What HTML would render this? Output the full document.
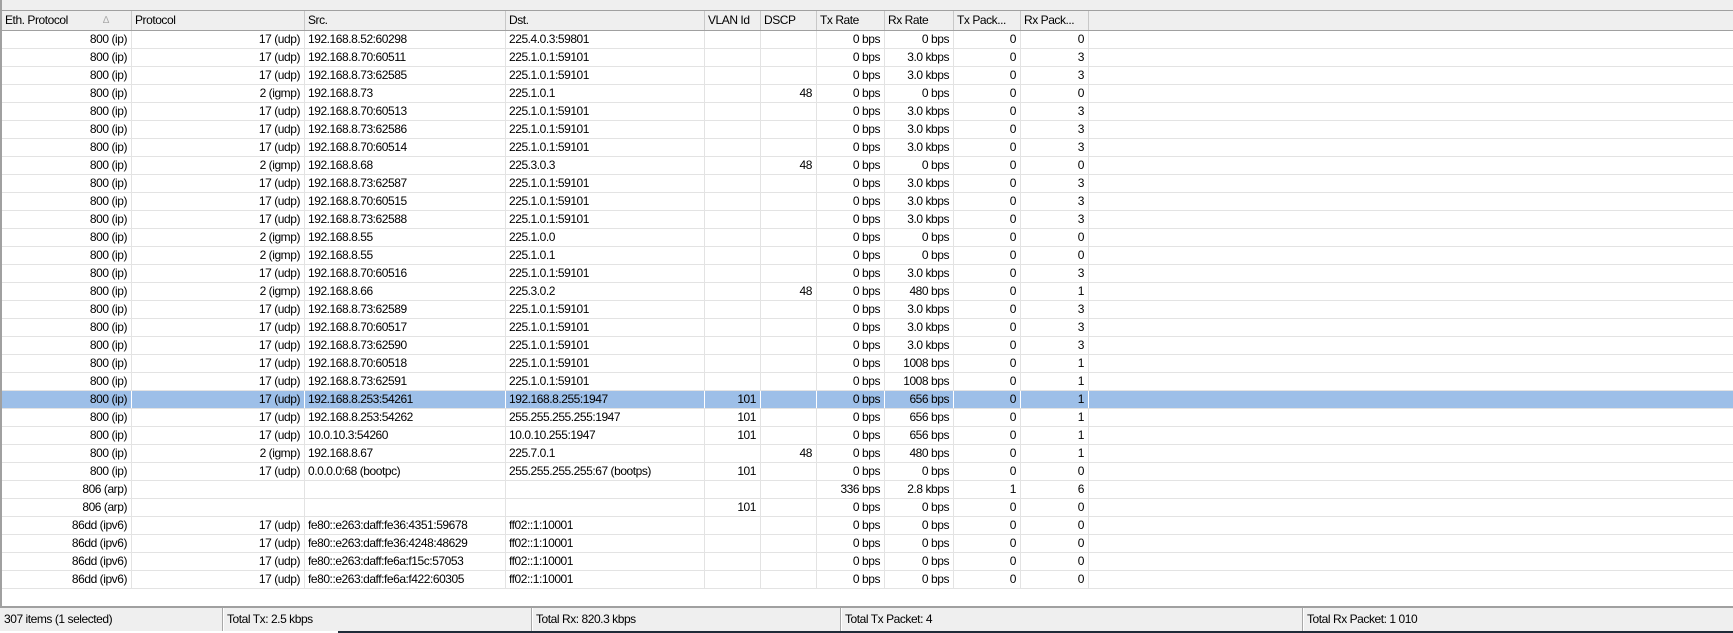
<!DOCTYPE html>
<html><head><meta charset="utf-8"><style>
*{margin:0;padding:0;box-sizing:border-box}
body{width:1733px;height:633px;overflow:hidden;background:#fff;font-family:"Liberation Sans",Arial,sans-serif;font-size:12px;letter-spacing:-0.45px;color:#000;position:relative}
#top{position:absolute;left:0;top:0;width:1733px;height:10px;background:#efefef;border-left:2px solid #a0a0a0}
#hdr{position:absolute;left:0;top:10px;width:1733px;height:21px;background:#efefef;border-top:1px solid #a0a0a0;border-bottom:1px solid #a0a0a0;border-left:2px solid #a0a0a0;display:flex}
#hdr div{height:19px;line-height:19px;padding-left:3px;border-right:1px solid #c8c8c8;white-space:nowrap;overflow:hidden;position:relative}
#body{position:absolute;left:0;top:31px;width:1733px;height:576px;border-left:2px solid #a0a0a0;background:#fff}
.r{display:flex;height:18px;border-bottom:1px solid #e3e3e3;width:1731px}
.r div{height:17px;line-height:17px;border-right:1px solid #e3e3e3;white-space:nowrap;overflow:hidden;padding:0 3px}
.r div.a{text-align:right;padding-right:4px}
.r.s{background:#9dbfe8}
.r.s div{border-right-color:#fff}
.c1{width:130px}.c2{width:173px}.c3{width:201px}.c4{width:199px}.c5{width:56px}.c6{width:56px}.c7{width:68px}.c8{width:69px}.c9{width:67px}.c10{width:68px}
.r div.cx,#hdr div.cx{flex:1;border-right:none}
#st{position:absolute;left:0;top:606px;width:1733px;height:25px;background:#efefef;border-top:2px solid #a0a0a0}
#st div{position:absolute;top:0;height:23px;line-height:23px;padding-left:4px;border-left:1px solid #a8a8a8;box-shadow:inset 1px 0 #fff}
#dk{position:absolute;left:338px;top:631px;width:1395px;height:2px;background:#1f2b38}
</style></head><body>
<div id="top"></div>
<div id="hdr">
<div class="c1">Eth. Protocol<span style="position:absolute;left:101px;color:#aaa;font-size:10px">∆</span></div><div class="c2">Protocol</div><div class="c3">Src.</div><div class="c4">Dst.</div><div class="c5">VLAN Id</div><div class="c6">DSCP</div><div class="c7">Tx Rate</div><div class="c8">Rx Rate</div><div class="c9">Tx Pack...</div><div class="c10">Rx Pack...</div><div class="cx"></div>
</div>
<div id="body">
<div class="r"><div class="c1 a">800 (ip)</div><div class="c2 a">17 (udp)</div><div class="c3">192.168.8.52:60298</div><div class="c4">225.4.0.3:59801</div><div class="c5 a"></div><div class="c6 a"></div><div class="c7 a">0 bps</div><div class="c8 a">0 bps</div><div class="c9 a">0</div><div class="c10 a">0</div><div class="cx"></div></div>
<div class="r"><div class="c1 a">800 (ip)</div><div class="c2 a">17 (udp)</div><div class="c3">192.168.8.70:60511</div><div class="c4">225.1.0.1:59101</div><div class="c5 a"></div><div class="c6 a"></div><div class="c7 a">0 bps</div><div class="c8 a">3.0 kbps</div><div class="c9 a">0</div><div class="c10 a">3</div><div class="cx"></div></div>
<div class="r"><div class="c1 a">800 (ip)</div><div class="c2 a">17 (udp)</div><div class="c3">192.168.8.73:62585</div><div class="c4">225.1.0.1:59101</div><div class="c5 a"></div><div class="c6 a"></div><div class="c7 a">0 bps</div><div class="c8 a">3.0 kbps</div><div class="c9 a">0</div><div class="c10 a">3</div><div class="cx"></div></div>
<div class="r"><div class="c1 a">800 (ip)</div><div class="c2 a">2 (igmp)</div><div class="c3">192.168.8.73</div><div class="c4">225.1.0.1</div><div class="c5 a"></div><div class="c6 a">48</div><div class="c7 a">0 bps</div><div class="c8 a">0 bps</div><div class="c9 a">0</div><div class="c10 a">0</div><div class="cx"></div></div>
<div class="r"><div class="c1 a">800 (ip)</div><div class="c2 a">17 (udp)</div><div class="c3">192.168.8.70:60513</div><div class="c4">225.1.0.1:59101</div><div class="c5 a"></div><div class="c6 a"></div><div class="c7 a">0 bps</div><div class="c8 a">3.0 kbps</div><div class="c9 a">0</div><div class="c10 a">3</div><div class="cx"></div></div>
<div class="r"><div class="c1 a">800 (ip)</div><div class="c2 a">17 (udp)</div><div class="c3">192.168.8.73:62586</div><div class="c4">225.1.0.1:59101</div><div class="c5 a"></div><div class="c6 a"></div><div class="c7 a">0 bps</div><div class="c8 a">3.0 kbps</div><div class="c9 a">0</div><div class="c10 a">3</div><div class="cx"></div></div>
<div class="r"><div class="c1 a">800 (ip)</div><div class="c2 a">17 (udp)</div><div class="c3">192.168.8.70:60514</div><div class="c4">225.1.0.1:59101</div><div class="c5 a"></div><div class="c6 a"></div><div class="c7 a">0 bps</div><div class="c8 a">3.0 kbps</div><div class="c9 a">0</div><div class="c10 a">3</div><div class="cx"></div></div>
<div class="r"><div class="c1 a">800 (ip)</div><div class="c2 a">2 (igmp)</div><div class="c3">192.168.8.68</div><div class="c4">225.3.0.3</div><div class="c5 a"></div><div class="c6 a">48</div><div class="c7 a">0 bps</div><div class="c8 a">0 bps</div><div class="c9 a">0</div><div class="c10 a">0</div><div class="cx"></div></div>
<div class="r"><div class="c1 a">800 (ip)</div><div class="c2 a">17 (udp)</div><div class="c3">192.168.8.73:62587</div><div class="c4">225.1.0.1:59101</div><div class="c5 a"></div><div class="c6 a"></div><div class="c7 a">0 bps</div><div class="c8 a">3.0 kbps</div><div class="c9 a">0</div><div class="c10 a">3</div><div class="cx"></div></div>
<div class="r"><div class="c1 a">800 (ip)</div><div class="c2 a">17 (udp)</div><div class="c3">192.168.8.70:60515</div><div class="c4">225.1.0.1:59101</div><div class="c5 a"></div><div class="c6 a"></div><div class="c7 a">0 bps</div><div class="c8 a">3.0 kbps</div><div class="c9 a">0</div><div class="c10 a">3</div><div class="cx"></div></div>
<div class="r"><div class="c1 a">800 (ip)</div><div class="c2 a">17 (udp)</div><div class="c3">192.168.8.73:62588</div><div class="c4">225.1.0.1:59101</div><div class="c5 a"></div><div class="c6 a"></div><div class="c7 a">0 bps</div><div class="c8 a">3.0 kbps</div><div class="c9 a">0</div><div class="c10 a">3</div><div class="cx"></div></div>
<div class="r"><div class="c1 a">800 (ip)</div><div class="c2 a">2 (igmp)</div><div class="c3">192.168.8.55</div><div class="c4">225.1.0.0</div><div class="c5 a"></div><div class="c6 a"></div><div class="c7 a">0 bps</div><div class="c8 a">0 bps</div><div class="c9 a">0</div><div class="c10 a">0</div><div class="cx"></div></div>
<div class="r"><div class="c1 a">800 (ip)</div><div class="c2 a">2 (igmp)</div><div class="c3">192.168.8.55</div><div class="c4">225.1.0.1</div><div class="c5 a"></div><div class="c6 a"></div><div class="c7 a">0 bps</div><div class="c8 a">0 bps</div><div class="c9 a">0</div><div class="c10 a">0</div><div class="cx"></div></div>
<div class="r"><div class="c1 a">800 (ip)</div><div class="c2 a">17 (udp)</div><div class="c3">192.168.8.70:60516</div><div class="c4">225.1.0.1:59101</div><div class="c5 a"></div><div class="c6 a"></div><div class="c7 a">0 bps</div><div class="c8 a">3.0 kbps</div><div class="c9 a">0</div><div class="c10 a">3</div><div class="cx"></div></div>
<div class="r"><div class="c1 a">800 (ip)</div><div class="c2 a">2 (igmp)</div><div class="c3">192.168.8.66</div><div class="c4">225.3.0.2</div><div class="c5 a"></div><div class="c6 a">48</div><div class="c7 a">0 bps</div><div class="c8 a">480 bps</div><div class="c9 a">0</div><div class="c10 a">1</div><div class="cx"></div></div>
<div class="r"><div class="c1 a">800 (ip)</div><div class="c2 a">17 (udp)</div><div class="c3">192.168.8.73:62589</div><div class="c4">225.1.0.1:59101</div><div class="c5 a"></div><div class="c6 a"></div><div class="c7 a">0 bps</div><div class="c8 a">3.0 kbps</div><div class="c9 a">0</div><div class="c10 a">3</div><div class="cx"></div></div>
<div class="r"><div class="c1 a">800 (ip)</div><div class="c2 a">17 (udp)</div><div class="c3">192.168.8.70:60517</div><div class="c4">225.1.0.1:59101</div><div class="c5 a"></div><div class="c6 a"></div><div class="c7 a">0 bps</div><div class="c8 a">3.0 kbps</div><div class="c9 a">0</div><div class="c10 a">3</div><div class="cx"></div></div>
<div class="r"><div class="c1 a">800 (ip)</div><div class="c2 a">17 (udp)</div><div class="c3">192.168.8.73:62590</div><div class="c4">225.1.0.1:59101</div><div class="c5 a"></div><div class="c6 a"></div><div class="c7 a">0 bps</div><div class="c8 a">3.0 kbps</div><div class="c9 a">0</div><div class="c10 a">3</div><div class="cx"></div></div>
<div class="r"><div class="c1 a">800 (ip)</div><div class="c2 a">17 (udp)</div><div class="c3">192.168.8.70:60518</div><div class="c4">225.1.0.1:59101</div><div class="c5 a"></div><div class="c6 a"></div><div class="c7 a">0 bps</div><div class="c8 a">1008 bps</div><div class="c9 a">0</div><div class="c10 a">1</div><div class="cx"></div></div>
<div class="r"><div class="c1 a">800 (ip)</div><div class="c2 a">17 (udp)</div><div class="c3">192.168.8.73:62591</div><div class="c4">225.1.0.1:59101</div><div class="c5 a"></div><div class="c6 a"></div><div class="c7 a">0 bps</div><div class="c8 a">1008 bps</div><div class="c9 a">0</div><div class="c10 a">1</div><div class="cx"></div></div>
<div class="r s"><div class="c1 a">800 (ip)</div><div class="c2 a">17 (udp)</div><div class="c3">192.168.8.253:54261</div><div class="c4">192.168.8.255:1947</div><div class="c5 a">101</div><div class="c6 a"></div><div class="c7 a">0 bps</div><div class="c8 a">656 bps</div><div class="c9 a">0</div><div class="c10 a">1</div><div class="cx"></div></div>
<div class="r"><div class="c1 a">800 (ip)</div><div class="c2 a">17 (udp)</div><div class="c3">192.168.8.253:54262</div><div class="c4">255.255.255.255:1947</div><div class="c5 a">101</div><div class="c6 a"></div><div class="c7 a">0 bps</div><div class="c8 a">656 bps</div><div class="c9 a">0</div><div class="c10 a">1</div><div class="cx"></div></div>
<div class="r"><div class="c1 a">800 (ip)</div><div class="c2 a">17 (udp)</div><div class="c3">10.0.10.3:54260</div><div class="c4">10.0.10.255:1947</div><div class="c5 a">101</div><div class="c6 a"></div><div class="c7 a">0 bps</div><div class="c8 a">656 bps</div><div class="c9 a">0</div><div class="c10 a">1</div><div class="cx"></div></div>
<div class="r"><div class="c1 a">800 (ip)</div><div class="c2 a">2 (igmp)</div><div class="c3">192.168.8.67</div><div class="c4">225.7.0.1</div><div class="c5 a"></div><div class="c6 a">48</div><div class="c7 a">0 bps</div><div class="c8 a">480 bps</div><div class="c9 a">0</div><div class="c10 a">1</div><div class="cx"></div></div>
<div class="r"><div class="c1 a">800 (ip)</div><div class="c2 a">17 (udp)</div><div class="c3">0.0.0.0:68 (bootpc)</div><div class="c4">255.255.255.255:67 (bootps)</div><div class="c5 a">101</div><div class="c6 a"></div><div class="c7 a">0 bps</div><div class="c8 a">0 bps</div><div class="c9 a">0</div><div class="c10 a">0</div><div class="cx"></div></div>
<div class="r"><div class="c1 a">806 (arp)</div><div class="c2 a"></div><div class="c3"></div><div class="c4"></div><div class="c5 a"></div><div class="c6 a"></div><div class="c7 a">336 bps</div><div class="c8 a">2.8 kbps</div><div class="c9 a">1</div><div class="c10 a">6</div><div class="cx"></div></div>
<div class="r"><div class="c1 a">806 (arp)</div><div class="c2 a"></div><div class="c3"></div><div class="c4"></div><div class="c5 a">101</div><div class="c6 a"></div><div class="c7 a">0 bps</div><div class="c8 a">0 bps</div><div class="c9 a">0</div><div class="c10 a">0</div><div class="cx"></div></div>
<div class="r"><div class="c1 a">86dd (ipv6)</div><div class="c2 a">17 (udp)</div><div class="c3">fe80::e263:daff:fe36:4351:59678</div><div class="c4">ff02::1:10001</div><div class="c5 a"></div><div class="c6 a"></div><div class="c7 a">0 bps</div><div class="c8 a">0 bps</div><div class="c9 a">0</div><div class="c10 a">0</div><div class="cx"></div></div>
<div class="r"><div class="c1 a">86dd (ipv6)</div><div class="c2 a">17 (udp)</div><div class="c3">fe80::e263:daff:fe36:4248:48629</div><div class="c4">ff02::1:10001</div><div class="c5 a"></div><div class="c6 a"></div><div class="c7 a">0 bps</div><div class="c8 a">0 bps</div><div class="c9 a">0</div><div class="c10 a">0</div><div class="cx"></div></div>
<div class="r"><div class="c1 a">86dd (ipv6)</div><div class="c2 a">17 (udp)</div><div class="c3">fe80::e263:daff:fe6a:f15c:57053</div><div class="c4">ff02::1:10001</div><div class="c5 a"></div><div class="c6 a"></div><div class="c7 a">0 bps</div><div class="c8 a">0 bps</div><div class="c9 a">0</div><div class="c10 a">0</div><div class="cx"></div></div>
<div class="r"><div class="c1 a">86dd (ipv6)</div><div class="c2 a">17 (udp)</div><div class="c3">fe80::e263:daff:fe6a:f422:60305</div><div class="c4">ff02::1:10001</div><div class="c5 a"></div><div class="c6 a"></div><div class="c7 a">0 bps</div><div class="c8 a">0 bps</div><div class="c9 a">0</div><div class="c10 a">0</div><div class="cx"></div></div>
</div>
<div id="st">
<div style="left:0;border-left:none;box-shadow:none">307 items (1 selected)</div>
<div style="left:222px">Total Tx: 2.5 kbps</div>
<div style="left:531px">Total Rx: 820.3 kbps</div>
<div style="left:840px">Total Tx Packet: 4</div>
<div style="left:1302px">Total Rx Packet: 1 010</div>
</div>
<div id="dk"></div>
</body></html>
